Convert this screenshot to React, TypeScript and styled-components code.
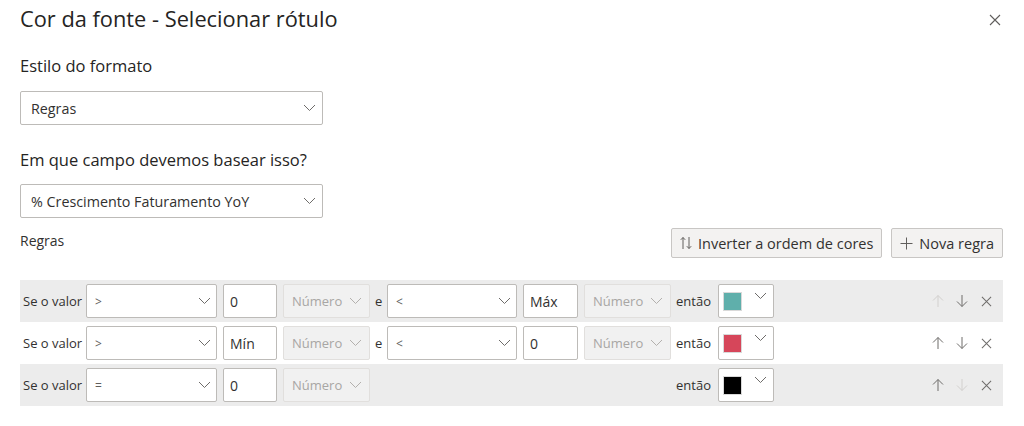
import styled, { createGlobalStyle } from 'styled-components'

const GlobalStyle = createGlobalStyle`
  body {
    margin: 0;
    background: #ffffff;
    font-family: "Open Sans", "Noto Sans", sans-serif;
    color: #252423;
  }
`

const Dialog = styled.div`
  width: 1024px;
  height: 426px;
  box-sizing: border-box;
  padding: 0 21px 0 20px;
  background: #ffffff;
`

const Header = styled.div`
  display: flex;
  align-items: center;
  justify-content: space-between;
  height: 36px;
`

const Title = styled.h1`
  margin: 0;
  font-size: 21.8px;
  font-weight: 400;
  color: #252423;
`

const CloseButton = styled.span`
  display: flex;
  align-items: center;
  justify-content: center;
  width: 16px;
  height: 16px;
  margin-top: 3px;
  color: #605e5c;
`

const FieldLabel = styled.div<{ $top: number }>`
  margin-top: ${(p) => p.$top}px;
  font-size: 16.5px;
  line-height: 22px;
  color: #252423;
`

const Dropdown = styled.div<{ $top: number }>`
  display: flex;
  align-items: center;
  justify-content: space-between;
  box-sizing: border-box;
  width: 303px;
  height: 34px;
  margin-top: ${(p) => p.$top}px;
  padding: 0 6px 0 10px;
  border: 1px solid #bdbbb8;
  border-radius: 2px;
  font-size: 14.3px;
  color: #323130;
`

const Toolbar = styled.div`
  display: flex;
  align-items: flex-start;
  margin-top: 10px;
  height: 30px;
`

const RulesLabel = styled.div`
  flex: 1;
  font-size: 14px;
  line-height: 26px;
  color: #323130;
`

const ToolButton = styled.div`
  display: flex;
  align-items: center;
  gap: 6px;
  box-sizing: border-box;
  height: 30px;
  margin-left: 9px;
  padding: 0 8px;
  background: #f3f2f1;
  border: 1px solid #c8c6c4;
  border-radius: 2px;
  font-size: 14.5px;
  color: #323130;
`

const RuleList = styled.div`
  margin-top: 22px;
`

const RuleRow = styled.div<{ $shaded: boolean }>`
  display: grid;
  grid-template-columns: 57px 131px 54px 87px 5px 130px 55px 87px 35px 56px 1fr auto;
  column-gap: 6px;
  align-items: center;
  height: 42px;
  padding: 0 5px 0 3px;
  background: ${(p) => (p.$shaded ? '#ececec' : 'transparent')};
`

const RowText = styled.span`
  font-size: 13px;
  color: #323130;
  white-space: nowrap;
`

const AndText = styled(RowText)`
  grid-column: 5;
  margin-left: -1px;
`

const ThenText = styled(RowText)`
  grid-column: 9;
  margin-left: -1px;
`

const Select = styled.div`
  display: flex;
  align-items: center;
  justify-content: space-between;
  box-sizing: border-box;
  height: 34px;
  padding: 0 5px 0 8px;
  background: #ffffff;
  border: 1px solid #bdbbb8;
  border-radius: 2px;
  font-size: 12px;
  color: #605e5c;
`

const Input = styled.div`
  display: flex;
  align-items: center;
  box-sizing: border-box;
  height: 34px;
  padding: 0 6px;
  background: #ffffff;
  border: 1px solid #bdbbb8;
  border-radius: 2px;
  font-size: 14px;
  color: #323130;
`

const UnitSelect = styled.div`
  display: flex;
  align-items: center;
  justify-content: space-between;
  box-sizing: border-box;
  height: 34px;
  padding: 0 7px 0 8px;
  background: #f1f1f1;
  border: 1px solid #e1dfdd;
  border-radius: 2px;
  font-size: 13px;
  color: #a8a6a4;
`

const ColorSelect = styled.div`
  grid-column: 10;
  display: flex;
  align-items: flex-start;
  justify-content: space-between;
  box-sizing: border-box;
  height: 34px;
  padding: 7px 6px 0 5px;
  background: #ffffff;
  border: 1px solid #bdbbb8;
  border-radius: 2px;
`

const Swatch = styled.span<{ $color: string }>`
  width: 17px;
  height: 17px;
  margin-top: 1px;
  background: ${(p) => p.$color};
  outline: 1px solid rgba(0, 0, 0, 0.15);
`

const Actions = styled.div`
  grid-column: 12;
  display: flex;
`

const ActionButton = styled.span<{ $disabled?: boolean }>`
  display: flex;
  align-items: center;
  justify-content: center;
  width: 24px;
  height: 24px;
  color: ${(p) => (p.$disabled ? '#d2d0ce' : '#6e6c6a')};
`

function Chevron({ color = '#6e6c6a' }: { color?: string }) {
  return (
    <svg width="13" height="8" viewBox="0 0 13 8">
      <polyline points="1,1 6.5,6.5 12,1" fill="none" stroke={color} strokeWidth="1" />
    </svg>
  )
}

function Cross({ size = 12 }: { size?: number }) {
  return (
    <svg width={size} height={size} viewBox="0 0 12 12">
      <path d="M1 1 L11 11 M11 1 L1 11" stroke="currentColor" strokeWidth="1.1" />
    </svg>
  )
}

function ArrowUp() {
  return (
    <svg width="12" height="14" viewBox="0 0 12 14">
      <path d="M6 13 V1.5 M1 6.5 L6 1.5 L11 6.5" fill="none" stroke="currentColor" strokeWidth="1" />
    </svg>
  )
}

function ArrowDown() {
  return (
    <svg width="12" height="14" viewBox="0 0 12 14">
      <path d="M6 1 V12.5 M1 7.5 L6 12.5 L11 7.5" fill="none" stroke="currentColor" strokeWidth="1" />
    </svg>
  )
}

function SwapIcon() {
  return (
    <svg width="12" height="14" viewBox="0 0 12 14">
      <path
        d="M3 13 V1.5 M0.8 3.8 L3 1.5 L5.2 3.8 M9 1 V12.5 M6.8 10.2 L9 12.5 L11.2 10.2"
        fill="none"
        stroke="#605e5c"
        strokeWidth="1"
      />
    </svg>
  )
}

function PlusIcon() {
  return (
    <svg width="13" height="13" viewBox="0 0 13 13">
      <path d="M6.5 0.5 V12.5 M0.5 6.5 H12.5" stroke="#605e5c" strokeWidth="1" />
    </svg>
  )
}

type Rule = {
  op1: string
  value1: string
  op2?: string
  value2?: string
  color: string
  canUp: boolean
  canDown: boolean
}

const rules: Rule[] = [
  { op1: '>', value1: '0', op2: '<', value2: 'Máx', color: '#5fafab', canUp: false, canDown: true },
  { op1: '>', value1: 'Mín', op2: '<', value2: '0', color: '#d6465a', canUp: true, canDown: true },
  { op1: '=', value1: '0', color: '#000000', canUp: true, canDown: false },
]

function RuleItem({ rule, shaded }: { rule: Rule; shaded: boolean }) {
  return (
    <RuleRow $shaded={shaded}>
      <RowText>Se o valor</RowText>
      <Select>
        <span>{rule.op1}</span>
        <Chevron />
      </Select>
      <Input>{rule.value1}</Input>
      <UnitSelect>
        <span>Número</span>
        <Chevron color="#b3b0ad" />
      </UnitSelect>
      {rule.op2 && (
        <>
          <AndText>e</AndText>
          <Select>
            <span>{rule.op2}</span>
            <Chevron />
          </Select>
          <Input>{rule.value2}</Input>
          <UnitSelect>
            <span>Número</span>
            <Chevron color="#b3b0ad" />
          </UnitSelect>
        </>
      )}
      <ThenText>então</ThenText>
      <ColorSelect>
        <Swatch $color={rule.color} />
        <Chevron />
      </ColorSelect>
      <Actions>
        <ActionButton $disabled={!rule.canUp}>
          <ArrowUp />
        </ActionButton>
        <ActionButton $disabled={!rule.canDown}>
          <ArrowDown />
        </ActionButton>
        <ActionButton>
          <Cross size={11} />
        </ActionButton>
      </Actions>
    </RuleRow>
  )
}

export default function App() {
  return (
    <>
      <GlobalStyle />
      <Dialog>
        <Header>
          <Title>Cor da fonte - Selecionar rótulo</Title>
          <CloseButton>
            <Cross size={12} />
          </CloseButton>
        </Header>

        <FieldLabel $top={19}>Estilo do formato</FieldLabel>
        <Dropdown $top={14}>
          <span>Regras</span>
          <Chevron />
        </Dropdown>

        <FieldLabel $top={24}>Em que campo devemos basear isso?</FieldLabel>
        <Dropdown $top={13}>
          <span>% Crescimento Faturamento YoY</span>
          <Chevron />
        </Dropdown>

        <Toolbar>
          <RulesLabel>Regras</RulesLabel>
          <ToolButton>
            <SwapIcon />
            Inverter a ordem de cores
          </ToolButton>
          <ToolButton>
            <PlusIcon />
            Nova regra
          </ToolButton>
        </Toolbar>

        <RuleList>
          {rules.map((rule, i) => (
            <RuleItem key={i} rule={rule} shaded={i !== 1} />
          ))}
        </RuleList>
      </Dialog>
    </>
  )
}
